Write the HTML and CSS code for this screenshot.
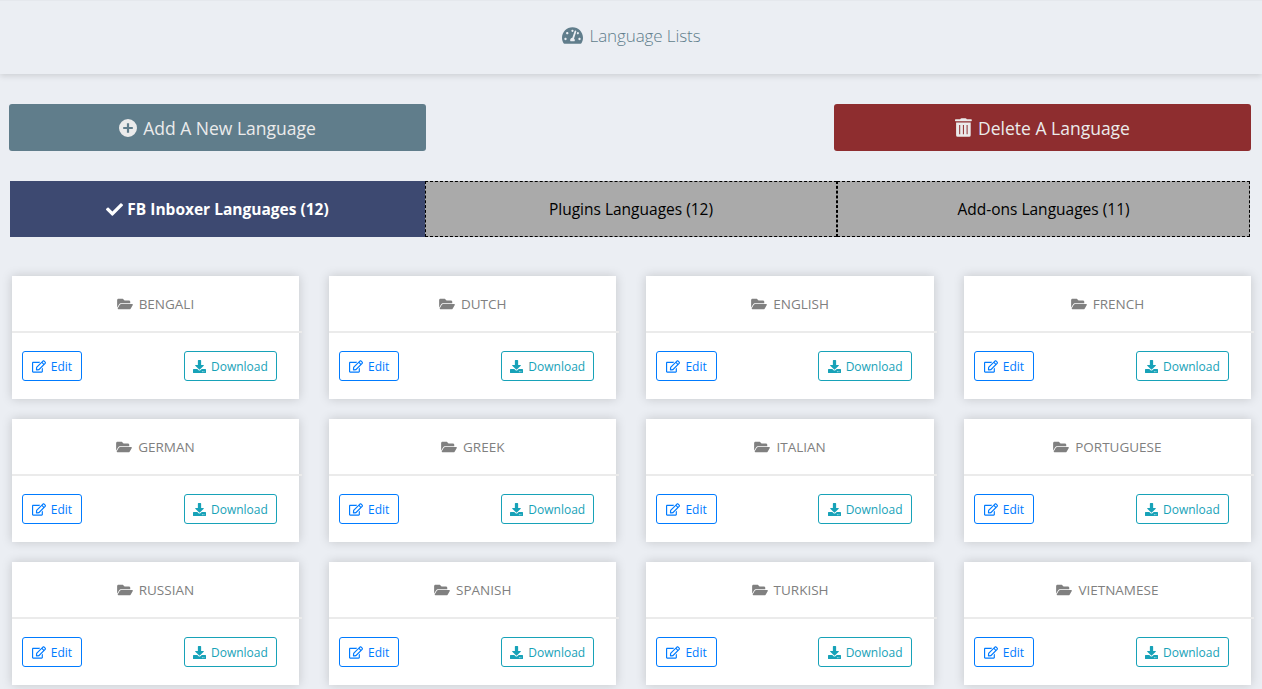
FILE: index.html
```html
<!DOCTYPE html>
<html lang="en">
<head>
<meta charset="utf-8">
<title>Language Lists</title>
<link rel="stylesheet" href="styles.css">
</head>
<body>
<svg class="sprite" aria-hidden="true">
<symbol id="dash" viewBox="0 0 576 512"><path d="M288 32C128.94 32 0 160.94 0 320c0 52.8 14.25 102.26 39.06 144.8 5.61 9.62 16.3 15.2 27.44 15.2h443c11.14 0 21.83-5.58 27.44-15.2C561.75 422.26 576 372.8 576 320c0-159.06-128.94-288-288-288zm0 64c14.71 0 26.58 10.13 30.32 23.65-1.11 2.26-2.64 4.23-3.45 6.67l-9.22 27.67c-5.13 3.49-10.97 6.01-17.64 6.01-17.67 0-32-14.33-32-32S270.33 96 288 96zM96 384c-17.67 0-32-14.33-32-32s14.33-32 32-32 32 14.33 32 32-14.33 32-32 32zm48-160c-17.67 0-32-14.33-32-32s14.33-32 32-32 32 14.33 32 32-14.33 32-32 32zm246.77-72.41l-61.33 184C343.13 347.33 352 364.54 352 384c0 11.72-3.38 22.55-8.88 32H232.88c-5.5-9.45-8.88-20.28-8.88-32 0-33.94 26.5-61.43 59.9-63.59l61.34-184.01c4.17-12.56 17.73-19.45 30.36-15.17 12.57 4.19 19.35 17.79 15.17 30.36zm14.66 57.2l15.52-46.55c3.47-1.29 7.13-2.23 11.05-2.23 17.67 0 32 14.33 32 32s-14.33 32-32 32c-11.38-.01-20.89-6.28-26.57-15.22zM480 384c-17.67 0-32-14.33-32-32s14.33-32 32-32 32 14.33 32 32-14.33 32-32 32z"/></symbol>
<symbol id="plus" viewBox="0 0 18 18"><path fill-rule="evenodd" d="M9 0a9 9 0 1 1 0 18A9 9 0 0 1 9 0zM7.9 4.2v3.7H4.2v2.2h3.7v3.7h2.2v-3.7h3.7V7.9h-3.7V4.2z"/></symbol>
<symbol id="trash" viewBox="0 0 17 19"><path fill-rule="evenodd" d="M5.5.8Q5.8.2 6.5.2h4q.7 0 1 .6l.3.5h4.4q.6 0 .6.6v.7q0 .6-.6.6H.6Q0 3.200 0 2.600v-.7q0-.6.6-.6h4.600zM1.100 4.400h14.600v12.800q0 1.600-1.600 1.600H2.700q-1.600 0-1.600-1.600zM4.200 7v9.300h1V7zm3.700 0v9.300h1V7zm3.700 0v9.300h1V7z"/></symbol>
<symbol id="check" viewBox="0 0 512 384"><path d="M173.900 375.400l-166.400-166.400c-10-10-10-26.200 0-36.200l36.200-36.200c10-10 26.200-10 36.200 0L192 248.700 432.100 8.600c10-10 26.200-10 36.200 0l36.200 36.200c10 10 10 26.200 0 36.200l-294.400 294.400c-10 10-26.200 10-36.200 0z"/></symbol>
<symbol id="folder" viewBox="0 0 576 512"><path d="M572.694 292.093L500.270 416.248A63.997 63.997 0 0 1 444.989 448H45.025c-18.523 0-30.064-20.093-20.731-36.093l72.424-124.155A64 64 0 0 1 152 256h399.964c18.523 0 30.064 20.093 20.730 36.093zM152 224h328v-48c0-26.510-21.490-48-48-48H272l-64-64H48C21.490 64 0 85.490 0 112v278.046l69.077-118.418C86.214 242.250 117.989 224 152 224z"/></symbol>
<symbol id="edit" viewBox="0 0 576 512"><path d="M402.300 344.900l32-32c5-5 13.700-1.500 13.700 5.700V464c0 26.500-21.500 48-48 48H48c-26.500 0-48-21.500-48-48V112c0-26.500 21.500-48 48-48h273.500c7.100 0 10.700 8.600 5.700 13.700l-32 32c-1.500 1.500-3.500 2.300-5.700 2.300H48v352h352V350.500c0-2.100.8-4.100 2.300-5.600zm156.600-201.800L296.300 405.700l-90.400 10c-26.200 2.900-48.500-19.200-45.600-45.600l10-90.400L432.900 17.100c22.900-22.900 59.900-22.900 82.700 0l43.200 43.200c22.900 22.900 22.900 60 .1 82.800zM460.100 174L402 115.900 216.200 301.800l-7.300 65.300 65.300-7.300L460.100 174zm64.800-79.700l-43.200-43.200c-4.100-4.100-10.800-4.100-14.800 0L436 82l58.100 58.100 30.900-30.900c4-4.200 4-10.800-.1-14.900z"/></symbol>
<symbol id="down" viewBox="0 0 512 512"><path d="M216 0h80c13.300 0 24 10.700 24 24v168h87.700c17.800 0 26.700 21.500 14.100 34.100L269.700 378.300c-7.500 7.500-19.800 7.500-27.300 0L90.100 226.100c-12.600-12.600-3.700-34.100 14.100-34.100H192V24c0-13.300 10.700-24 24-24zm296 376v112c0 13.300-10.700 24-24 24H24c-13.300 0-24-10.700-24-24V376c0-13.300 10.700-24 24-24h146.700l49 49c20.100 20.100 52.500 20.100 72.600 0l49-49H488c13.300 0 24 10.700 24 24zm-124 88c0-11-9-20-20-20s-20 9-20 20 9 20 20 20 20-9 20-20zm64 0c0-11-9-20-20-20s-20 9-20 20 9 20 20 20 20-9 20-20z"/></symbol>
</svg>
<header class="page-header"><svg class="icon-dash"><use href="#dash"/></svg><h1>Language Lists</h1></header>
<main>
<div class="actions">
<a class="action add"><svg class="icon-plus"><use href="#plus"/></svg><span>Add A New Language</span></a>
<a class="action delete"><svg class="icon-trash"><use href="#trash"/></svg><span>Delete A Language</span></a>
</div>
<nav class="tabs">
<a class="tab active"><svg class="icon-check"><use href="#check"/></svg><span>FB Inboxer Languages (12)</span></a>
<a class="tab plugins"><span>Plugins Languages (12)</span></a>
<a class="tab addons"><span>Add-ons Languages (11)</span></a>
</nav>
<section class="grid">
<article class="card"><h2><svg class="icon-folder"><use href="#folder"/></svg><span>BENGALI</span></h2><hr><div class="buttons"><a class="btn edit"><svg class="icon-edit"><use href="#edit"/></svg><span>Edit</span></a><a class="btn download"><svg class="icon-down"><use href="#down"/></svg><span>Download</span></a></div></article>
<article class="card"><h2><svg class="icon-folder"><use href="#folder"/></svg><span>DUTCH</span></h2><hr><div class="buttons"><a class="btn edit"><svg class="icon-edit"><use href="#edit"/></svg><span>Edit</span></a><a class="btn download"><svg class="icon-down"><use href="#down"/></svg><span>Download</span></a></div></article>
<article class="card"><h2><svg class="icon-folder"><use href="#folder"/></svg><span>ENGLISH</span></h2><hr><div class="buttons"><a class="btn edit"><svg class="icon-edit"><use href="#edit"/></svg><span>Edit</span></a><a class="btn download"><svg class="icon-down"><use href="#down"/></svg><span>Download</span></a></div></article>
<article class="card"><h2><svg class="icon-folder"><use href="#folder"/></svg><span>FRENCH</span></h2><hr><div class="buttons"><a class="btn edit"><svg class="icon-edit"><use href="#edit"/></svg><span>Edit</span></a><a class="btn download"><svg class="icon-down"><use href="#down"/></svg><span>Download</span></a></div></article>
<article class="card"><h2><svg class="icon-folder"><use href="#folder"/></svg><span>GERMAN</span></h2><hr><div class="buttons"><a class="btn edit"><svg class="icon-edit"><use href="#edit"/></svg><span>Edit</span></a><a class="btn download"><svg class="icon-down"><use href="#down"/></svg><span>Download</span></a></div></article>
<article class="card"><h2><svg class="icon-folder"><use href="#folder"/></svg><span>GREEK</span></h2><hr><div class="buttons"><a class="btn edit"><svg class="icon-edit"><use href="#edit"/></svg><span>Edit</span></a><a class="btn download"><svg class="icon-down"><use href="#down"/></svg><span>Download</span></a></div></article>
<article class="card"><h2><svg class="icon-folder"><use href="#folder"/></svg><span>ITALIAN</span></h2><hr><div class="buttons"><a class="btn edit"><svg class="icon-edit"><use href="#edit"/></svg><span>Edit</span></a><a class="btn download"><svg class="icon-down"><use href="#down"/></svg><span>Download</span></a></div></article>
<article class="card"><h2><svg class="icon-folder"><use href="#folder"/></svg><span>PORTUGUESE</span></h2><hr><div class="buttons"><a class="btn edit"><svg class="icon-edit"><use href="#edit"/></svg><span>Edit</span></a><a class="btn download"><svg class="icon-down"><use href="#down"/></svg><span>Download</span></a></div></article>
<article class="card"><h2><svg class="icon-folder"><use href="#folder"/></svg><span>RUSSIAN</span></h2><hr><div class="buttons"><a class="btn edit"><svg class="icon-edit"><use href="#edit"/></svg><span>Edit</span></a><a class="btn download"><svg class="icon-down"><use href="#down"/></svg><span>Download</span></a></div></article>
<article class="card"><h2><svg class="icon-folder"><use href="#folder"/></svg><span>SPANISH</span></h2><hr><div class="buttons"><a class="btn edit"><svg class="icon-edit"><use href="#edit"/></svg><span>Edit</span></a><a class="btn download"><svg class="icon-down"><use href="#down"/></svg><span>Download</span></a></div></article>
<article class="card"><h2><svg class="icon-folder"><use href="#folder"/></svg><span>TURKISH</span></h2><hr><div class="buttons"><a class="btn edit"><svg class="icon-edit"><use href="#edit"/></svg><span>Edit</span></a><a class="btn download"><svg class="icon-down"><use href="#down"/></svg><span>Download</span></a></div></article>
<article class="card"><h2><svg class="icon-folder"><use href="#folder"/></svg><span>VIETNAMESE</span></h2><hr><div class="buttons"><a class="btn edit"><svg class="icon-edit"><use href="#edit"/></svg><span>Edit</span></a><a class="btn download"><svg class="icon-down"><use href="#down"/></svg><span>Download</span></a></div></article>
</section>
</main>
</body>
</html>
```
FILE: styles.css
```css
* { box-sizing: border-box; }
html, body { height: 100%; overflow: hidden; }
body { margin: 0; background: #ebeef3; font-family: "Open Sans", "Noto Sans", sans-serif; color: #000; }
svg { fill: currentColor; flex: none; }
span, h1 { white-space: nowrap; }
.sprite { display: none; }
.page-header { height: 74px; padding-bottom: 3px; display: flex; align-items: center; justify-content: center; gap: 7px; color: #607d8b; box-shadow: 0 2px 6px rgba(0,0,0,.13), inset 0 1px #e5e8ed; }
h1 { margin: 0; font-size: 17px; font-weight: 300; line-height: 24px; letter-spacing: -.1px; }
.icon-dash { width: 21px; height: 19px; }
main { padding: 30px 11px 0 9px; }
.actions { display: flex; justify-content: space-between; }
.action { width: 417px; height: 47px; border-radius: 3px; display: flex; align-items: center; justify-content: center; gap: 6px; color: #ebebeb; font-size: 17.5px; }
.add { background: #607d8b; }
.delete { background: #8e2d2f; }
.icon-plus { width: 18px; height: 18px; }
.icon-trash { width: 17px; height: 19px; }
.tabs { display: grid; grid-template-columns: 415px 412px 413px; margin: 30px 0 0 1px; height: 56px; }
.tab { display: flex; align-items: center; justify-content: center; gap: 4px; background: #aaa; border: 1px dashed #000; font-size: 15.5px; }
.active { background: #3d4971; border: 0; color: #fff; font-weight: 700; }
.icon-check { width: 17px; height: 13px; }
.grid { display: grid; grid-template-columns: repeat(4, 287.5px); column-gap: 29.830px; row-gap: 20px; margin: 39px 0 0 2.670px; }
.card { height: 123px; background: #fff; box-shadow: 0 0 10px rgba(0,0,0,.17); }
.card h2 { margin: 0; height: 55px; display: flex; align-items: center; justify-content: center; gap: 6px; color: #808080; font-size: 13.5px; font-weight: 400; }
.icon-folder { width: 16px; height: 14px; }
.card hr { width: 290.500px; height: 2px; margin: 0; border: 0; background: #ebebeb; }
.buttons { display: flex; justify-content: space-between; padding: 18px 22px 0 10px; }
.btn { height: 30px; border: 1px solid; border-radius: 3px; display: flex; align-items: center; justify-content: center; gap: 5px; font-size: 12px; }
.edit { width: 60.500px; color: #007bff; }
.download { width: 93.500px; color: #17a2b8; }
.icon-edit { width: 14px; height: 13px; }
.icon-down { width: 13px; height: 13px; }
```
